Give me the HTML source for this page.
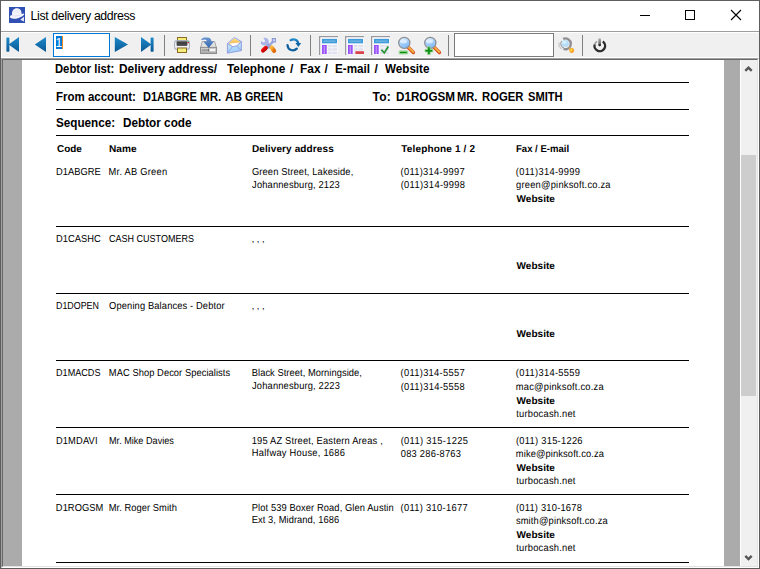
<!DOCTYPE html>
<html lang="en">
<head>
<meta charset="utf-8">
<title>List delivery address</title>
<style>
html,body{margin:0;padding:0;width:760px;height:569px;overflow:hidden;background:#fff;}
body{position:relative;font-family:"Liberation Sans",Arial,sans-serif;}
.abs{position:absolute;}
#win{position:absolute;left:0;top:0;width:760px;height:569px;background:#5e5e5e;}
#title{position:absolute;left:1px;top:1px;width:758px;height:30px;background:#fff;}
#title .cap{position:absolute;left:29.6px;top:7px;font-size:12.3px;line-height:16px;color:#000;white-space:pre;letter-spacing:-0.36px;}
#tline{position:absolute;left:1px;top:31px;width:758px;height:1px;background:#9d9d9d;}
#tb{position:absolute;left:1px;top:32px;width:758px;height:25px;background:#f0f0f0;border-left:1px solid #fff;border-top:1px solid #fff;box-sizing:border-box;}
#tbw{position:absolute;left:1px;top:57px;width:758px;height:1px;background:#fff;}
#panel{position:absolute;left:1px;top:58px;width:758px;height:510px;box-sizing:border-box;border-top:1px solid #a0a0a0;border-left:1px solid #a0a0a0;border-right:1px solid #fff;border-bottom:1px solid #fff;background:#ababab;}
#panel2{position:absolute;left:2px;top:59px;width:756px;height:508px;box-sizing:border-box;border-top:1px solid #696969;border-left:1px solid #696969;border-right:1px solid #e3e3e3;border-bottom:1px solid #e3e3e3;background:#ababab;}
#page{position:absolute;left:22px;top:60px;width:702px;height:506px;background:#fff;}
#sb{position:absolute;left:740px;top:60px;width:17px;height:506px;background:#f0f0f0;border-left:1px solid #fff;box-sizing:border-box;}
#thumb{position:absolute;left:741px;top:155px;width:15px;height:241px;background:#cdcdcd;}
.sep{position:absolute;top:35px;width:1px;height:21px;background:#808080;}
.t{position:absolute;white-space:pre;line-height:14px;color:#000;}
.H{font-size:12.0px;font-weight:bold;transform-origin:0 11.00px;}
.C{font-size:10.0px;font-weight:bold;transform-origin:0 9.00px;text-rendering:geometricPrecision;}
.D{font-size:9.33px;font-weight:normal;transform-origin:0 10.00px;text-rendering:geometricPrecision;}

.rule{position:absolute;left:56px;width:633px;height:1px;background:#000;}
.inp{position:absolute;box-sizing:border-box;background:#fff;}
svg{position:absolute;overflow:visible;}
</style>
</head>
<body>
<div id="win"></div>
<div id="title"><span class="cap">List delivery address</span></div>
<div id="tline"></div>
<div id="tb"></div>
<div id="tbw"></div>
<div id="panel"></div>
<div id="panel2"></div>
<div id="page"></div>
<div id="sb"></div>
<div id="thumb"></div>
<svg width="0" height="0" style="left:0;top:0">
<defs>
<linearGradient id="gb" x1="0" y1="0" x2="0" y2="1"><stop offset="0" stop-color="#1e8acb"/><stop offset="1" stop-color="#0a5893"/></linearGradient>
<radialGradient id="lens" cx="0.45" cy="0.35" r="0.7"><stop offset="0" stop-color="#e8f3ff"/><stop offset="1" stop-color="#8fbef0"/></radialGradient>
<linearGradient id="hdl" x1="0" y1="0" x2="1" y2="1"><stop offset="0" stop-color="#f6b24a"/><stop offset="1" stop-color="#e0661a"/></linearGradient>
</defs>
</svg>
<!-- title icon -->
<svg style="left:9px;top:7px" width="16" height="16" viewBox="0 0 16 16">
<rect x="0" y="0" width="16" height="16" fill="#3150b4"/>
<path d="M3.1 8 C2.5 3.6 5 1.3 7.8 1.3 C10.8 1.3 12.7 3.4 12.5 7.1 L14.9 6.5 C15.7 7.5 14 9.5 9.6 10.9 C5.6 12.2 1.6 12.1 0.9 10.1 C0.6 9.1 1.6 8.4 3.1 8 Z" fill="#f3f5fb"/>
<path d="M3.1 8 C4.6 9.8 10 9 12.5 7.1" fill="none" stroke="#d3d8ec" stroke-width="0.7"/>
<path d="M5.2 3.6 L10.2 3.4 L10.4 5.6 L5.4 5.9 Z" fill="#e6e9f5" opacity="0.7"/>
<path d="M15 9.8 L15 14.6 L11.2 12.7 Z" fill="#e4e7f4"/>
</svg>
<!-- window controls -->
<svg style="left:630px;top:0" width="130" height="31" viewBox="0 0 130 31">
<rect x="10" y="15" width="10" height="1" fill="#000"/>
<rect x="55.5" y="10.5" width="9" height="9" fill="none" stroke="#000" stroke-width="1"/>
<path d="M101 10 L111 20 M111 10 L101 20" stroke="#000" stroke-width="1.1" fill="none"/>
</svg>
<!-- nav icons -->
<svg style="left:0;top:32px" width="160" height="26" viewBox="0 32 160 26">
<rect x="6.4" y="37.6" width="3" height="14.2" rx="0.8" fill="url(#gb)"/>
<path d="M19 37.1 L19 51.9 L8.6 44.5 Z" fill="url(#gb)"/>
<path d="M46 37 L46 52 L34.8 44.5 Z" fill="url(#gb)"/>
<path d="M114.8 37 L114.8 52 L128 44.5 Z" fill="url(#gb)"/>
<path d="M141 37.1 L141 51.9 L151.4 44.5 Z" fill="url(#gb)"/>
<rect x="150.6" y="37.6" width="3" height="14.2" rx="0.8" fill="url(#gb)"/>
</svg>
<!-- page input -->
<div class="inp" style="left:53px;top:33px;width:57px;height:24px;border:1px solid #0078d7;"></div>
<div class="abs" style="left:56px;top:36px;width:6px;height:13px;background:#0078d7;"></div>
<div class="abs" style="left:62px;top:36px;width:1px;height:13px;background:#f08a1c;"></div>
<span class="t" style="left:55.6px;top:35.5px;font-size:12px;color:#fff;">1</span>
<!-- separators -->
<div class="sep" style="left:164px"></div>
<div class="sep" style="left:250px"></div>
<div class="sep" style="left:310px"></div>
<div class="sep" style="left:448px"></div>
<div class="sep" style="left:582px"></div>
<!-- search input -->
<div class="inp" style="left:454px;top:33px;width:100px;height:24px;border:1px solid #7a7a7a;"></div>
<svg width="0" height="0" style="left:0;top:0"><defs>
<linearGradient id="slot" x1="0" y1="0" x2="0" y2="1"><stop offset="0" stop-color="#8a8a8a"/><stop offset="0.35" stop-color="#3a3a3a"/><stop offset="1" stop-color="#5a5a5a"/></linearGradient>
<linearGradient id="pbody" x1="0" y1="0" x2="0" y2="1"><stop offset="0" stop-color="#d5d9e4"/><stop offset="0.6" stop-color="#fbfbfd"/><stop offset="1" stop-color="#c9cedb"/></linearGradient>
<linearGradient id="yel" x1="0" y1="0" x2="1" y2="0"><stop offset="0" stop-color="#fbf76c"/><stop offset="0.5" stop-color="#efe884"/><stop offset="1" stop-color="#fbf76c"/></linearGradient>
<linearGradient id="drv" x1="0" y1="0" x2="0" y2="1"><stop offset="0" stop-color="#d6d6d6"/><stop offset="1" stop-color="#a8a8a8"/></linearGradient>
<linearGradient id="arr" x1="0" y1="0" x2="0" y2="1"><stop offset="0" stop-color="#6a97d2"/><stop offset="1" stop-color="#3467ad"/></linearGradient>
<linearGradient id="env" x1="0" y1="0" x2="0.3" y2="1"><stop offset="0" stop-color="#e0f4fc"/><stop offset="1" stop-color="#9ccff8"/></linearGradient>
<linearGradient id="flap" x1="0" y1="0" x2="0" y2="1"><stop offset="0" stop-color="#fbe07a"/><stop offset="1" stop-color="#f3a64a"/></linearGradient>
<linearGradient id="redh" x1="0" y1="0" x2="1" y2="1"><stop offset="0" stop-color="#f41010"/><stop offset="1" stop-color="#b80000"/></linearGradient>
<linearGradient id="orh" x1="0" y1="0" x2="1" y2="1"><stop offset="0" stop-color="#fcb83c"/><stop offset="1" stop-color="#e06a08"/></linearGradient>
<linearGradient id="blu2" x1="0" y1="0" x2="0" y2="1"><stop offset="0" stop-color="#1e88ca"/><stop offset="1" stop-color="#0a5693"/></linearGradient>
<linearGradient id="lensg" x1="0.2" y1="0" x2="0.6" y2="1"><stop offset="0" stop-color="#dcecff"/><stop offset="0.5" stop-color="#a6cffb"/><stop offset="1" stop-color="#7db6f3"/></linearGradient>
<linearGradient id="pwr" x1="0" y1="0" x2="0" y2="1"><stop offset="0" stop-color="#b4b4b4"/><stop offset="0.7" stop-color="#6a6a6a"/><stop offset="0.85" stop-color="#1c1c1c"/><stop offset="1" stop-color="#2c2c2c"/></linearGradient>
<radialGradient id="ball" cx="0.4" cy="0.4" r="0.6"><stop offset="0" stop-color="#ffe040"/><stop offset="1" stop-color="#f58a10"/></radialGradient>
<g id="layout">
<path d="M0.8 19 L0.8 0.8 L19 0.8" fill="none" stroke="#98989f" stroke-width="1.6"/>
<rect x="1.3" y="1.3" width="17.7" height="17.5" fill="#f6f6fb"/>
<rect x="3" y="2.9" width="15" height="4.4" fill="#3b9bdb"/>
<rect x="4.5" y="4.6" width="12" height="1" fill="#8cc0e4"/>
<rect x="3" y="9" width="4.7" height="9" fill="#9950f9"/>
<rect x="4.7" y="10" width="1.1" height="8" fill="#c3a4fb"/>
</g>
<g id="grid">
<rect x="9" y="9" width="9" height="2.2" fill="#e0e2ee"/>
<rect x="9" y="12.2" width="9" height="2.4" fill="#e0e2ee"/>
<rect x="9" y="15.7" width="9" height="2.3" fill="#e0e2ee"/>
<rect x="12.6" y="9" width="1" height="9" fill="#f0f1f8"/>
</g>
<g id="mag">
<path d="M9.6 9.7 L15.4 15.5" stroke="#d8481a" stroke-width="3.4" stroke-linecap="round"/>
<path d="M9.8 9.5 L15.3 15.0" stroke="#f6b040" stroke-width="1.8" stroke-linecap="round"/>
<circle cx="6.3" cy="5.9" r="5.6" fill="url(#lensg)" stroke="#8c8c90" stroke-width="1.2"/>
<ellipse cx="5.6" cy="4.2" rx="3.4" ry="2" fill="#eef6ff" opacity="0.7"/>
</g>
</defs></svg>
<!-- printer -->
<svg style="left:174px;top:37px" width="16" height="16" viewBox="0 0 16 16">
<rect x="3.5" y="0.5" width="9" height="4" fill="url(#yel)" stroke="#8b6b22" stroke-width="1"/>
<rect x="0.6" y="3.6" width="14.8" height="8.8" rx="1.8" fill="url(#pbody)" stroke="#9aa1b6" stroke-width="0.9"/>
<rect x="2.6" y="3.9" width="10.8" height="5" rx="0.6" fill="url(#slot)"/>
<rect x="3.5" y="11" width="9" height="4.5" fill="url(#yel)" stroke="#8b6b22" stroke-width="1"/>
<rect x="13.7" y="4" width="1.2" height="1" fill="#4cc060"/>
<rect x="13.7" y="5" width="1.2" height="1.2" fill="#d01020"/>
</svg>
<!-- export -->
<svg style="left:200px;top:37px" width="17" height="17" viewBox="0 0 17 17">
<path d="M2.2 4.5 L14.6 4.5 L16.4 10.6 L0.6 10.6 Z" fill="#e2e2e2" stroke="#a2a2a2" stroke-width="0.9"/>
<rect x="0.5" y="10.4" width="16" height="6.1" fill="url(#drv)" stroke="#8e8e8e" stroke-width="1"/>
<rect x="1.8" y="12.3" width="7" height="1.6" fill="#9a9a9a"/>
<rect x="9.6" y="12.2" width="5.6" height="2" fill="#fafafa"/>
<rect x="8.2" y="11.6" width="0.9" height="2.8" fill="#6a6a6a"/>
<path d="M0.9 2.6 L3.6 0.4 L8 0.4 C10.8 0.7 11.3 2.6 11.4 4.5 L14 4.5 L8.7 11 L3.4 4.5 L6.8 4.5 C6.8 3.3 6 2.6 4.4 2.6 L2.4 3.1 Z" fill="url(#arr)"/>
</svg>
<!-- mail -->
<svg style="left:226px;top:37px" width="16" height="17" viewBox="0 0 16 17">
<path d="M1.4 6.6 L8.4 0.5 L15.4 4.6 L15.4 13.6 L1.4 16.2 Z" fill="url(#env)" stroke="#8e97de" stroke-width="0.9" stroke-linejoin="round"/>
<path d="M2.6 6.2 L8.4 1.3 L14.2 4.8 L10.6 8.6 L6.4 9.2 Z" fill="url(#flap)"/>
<path d="M3.6 6.6 L13.4 5.4 L10.6 8.8 L6.4 9.4 Z" fill="#fdfdfd"/>
<path d="M1.4 6.6 L6.6 9.6 L10.6 8.9 L15.4 4.6" fill="none" stroke="#8b92dc" stroke-width="0.8"/>
<path d="M1.6 15.8 L6.6 9.6 M10.6 8.9 L15.2 13.4" fill="none" stroke="#8e97de" stroke-width="0.8"/>
</svg>
<!-- tools -->
<svg style="left:260px;top:37px" width="16" height="16" viewBox="0 0 16 16">
<path d="M13.2 4.4 L8.4 9.2" stroke="#98a4de" stroke-width="2.2"/>
<rect x="11.8" y="1" width="4.2" height="4.6" fill="#8f9bd8"/>
<rect x="13" y="2.2" width="2" height="2.2" fill="#cdd3f2"/>
<path d="M5 5 L10.4 10.4" stroke="#98a4de" stroke-width="3.6"/>
<path d="M3.4 0.9 C7.2 0 9.4 2.8 8.6 6 C7.4 9 3.8 9.2 1 7 L0.8 4 L3.8 5.6 L5.4 4.2 Z" fill="#a9b4e9"/>
<path d="M6.6 9.6 L10 9.6 L11.2 11 L8 11.4 Z" fill="#8b97d4"/>
<path d="M5.8 10.9 L3 13.5" stroke="url(#redh)" stroke-width="4.2" stroke-linecap="round"/>
<path d="M11.6 10.5 L14 13.7" stroke="url(#orh)" stroke-width="4.4" stroke-linecap="round"/>
</svg>
<!-- refresh -->
<svg style="left:286px;top:37px" width="16" height="16" viewBox="286 37 16 16">
<path d="M290.6 40.2 C293.8 38.2 298.0 40.0 298.3 44.0" fill="none" stroke="url(#blu2)" stroke-width="2.2" stroke-linecap="round"/>
<path d="M295.4 43.0 L301.2 43.0 L298.4 47.0 Z" fill="#0f69a8"/>
<path d="M287.5 45.0 C287.8 50.6 293.8 51.6 296.8 48.6" fill="none" stroke="#0c5e9c" stroke-width="2.2" stroke-linecap="round"/>
</svg>
<!-- layout icons -->
<svg style="left:319px;top:36px" width="19" height="19" viewBox="0 0 19 19"><use href="#layout"/><use href="#grid"/></svg>
<svg style="left:345px;top:36px" width="19" height="19" viewBox="0 0 19 19"><use href="#layout"/><use href="#grid"/><rect x="10.2" y="15" width="8.8" height="3.2" fill="#f6f6fb"/><rect x="10.4" y="15.2" width="8.6" height="2.8" fill="#d9434a"/></svg>
<svg style="left:371px;top:36px" width="19" height="19" viewBox="0 0 19 19"><use href="#layout"/><use href="#grid"/><path d="M10.4 13.9 L13.3 16.9 L17.3 10.6" fill="none" stroke="#2c9434" stroke-width="1.8"/></svg>
<!-- zoom out / in -->
<svg style="left:398px;top:37px" width="18" height="18" viewBox="0 0 18 18"><use href="#mag"/>
<rect x="1.1" y="13.8" width="8.6" height="3.2" rx="0.6" fill="#a6e0a0" stroke="#7ccb78" stroke-width="0.6"/><rect x="2" y="14.8" width="6.8" height="1.3" fill="#0c8a10"/></svg>
<svg style="left:424px;top:36.7px" width="18" height="18" viewBox="0 0 18 18"><use href="#mag"/>
<path d="M3.6 9.8 L6.2 9.8 L6.2 12.4 L8.8 12.4 L8.8 15 L6.2 15 L6.2 17.6 L3.6 17.6 L3.6 15 L1 15 L1 12.4 L3.6 12.4 Z" fill="#129016" stroke="#9ad896" stroke-width="0.8"/></svg>
<!-- search -->
<svg style="left:558px;top:37px" width="17" height="17" viewBox="558 37 17 17">
<path d="M563.12 38.91 A5.4 5.4 0 1 1 563.55 48.87" fill="none" stroke="#8f8f94" stroke-width="2.4"/>
<path d="M563.83 48.12 A4.6 4.6 0 0 1 561.63 41.16" fill="none" stroke="#9c9ca0" stroke-width="1.1"/>
<path d="M561.61 49.21 A6.6 6.6 0 0 1 558.90 42.65" fill="none" stroke="#b4b4b8" stroke-width="0.9"/>
<circle cx="565.2" cy="43.5" r="3.6" fill="#b4def8"/>
<ellipse cx="564.4" cy="42.3" rx="2" ry="1.5" fill="#dcf0fc"/>
<path d="M568.8 47.4 L570.4 49.2" stroke="#d0a060" stroke-width="1.6"/>
<circle cx="571.7" cy="50.5" r="2.4" fill="url(#ball)"/>
</svg>
<!-- power -->
<svg style="left:592px;top:37px" width="16" height="16" viewBox="592 37 16 16">
<path d="M596.99 41.41 A5.3 5.3 0 0 0 594.68 44.53" fill="none" stroke="#9c9c9c" stroke-width="1.6"/>
<path d="M594.68 44.53 A5.3 5.3 0 1 0 602.84 41.56" fill="none" stroke="#2b2b2b" stroke-width="2.3"/>
<rect x="598.3" y="38.2" width="2.7" height="8" rx="1.2" fill="url(#pwr)"/>
</svg>

<!-- scrollbar arrows -->
<svg style="left:740px;top:60px" width="17" height="506" viewBox="0 0 17 506">
<path d="M5.3 10.9 L8.5 7.7 L11.7 10.9" fill="none" stroke="#555" stroke-width="2.4"/>
<path d="M5.3 495.9 L8.5 499.1 L11.7 495.9" fill="none" stroke="#555" stroke-width="2.4"/>
</svg>

<div class="rule" style="top:82px"></div><div class="rule" style="top:109px"></div><div class="rule" style="top:135px"></div><div class="rule" style="top:226px"></div><div class="rule" style="top:293px"></div><div class="rule" style="top:360px"></div><div class="rule" style="top:427px"></div><div class="rule" style="top:494px"></div><div class="rule" style="top:562px"></div>
<span class="t H" style="left:55.47px;top:62.00px;transform:scale(0.9373,1.0);">Debtor list:</span>
<span class="t H" style="left:118.98px;top:62.00px;transform:scale(0.9871,1.0);">Delivery address/</span>
<span class="t H" style="left:226.50px;top:62.00px;transform:scale(0.9848,1.0);">Telephone</span>
<span class="t H" style="left:289.94px;top:62.00px;">/</span>
<span class="t H" style="left:299.94px;top:62.00px;transform:scale(0.9914,1.0);">Fax</span>
<span class="t H" style="left:324.61px;top:62.00px;">/</span>
<span class="t H" style="left:334.60px;top:62.00px;transform:scale(0.9735,1.0);">E-mail</span>
<span class="t H" style="left:374.46px;top:62.00px;">/</span>
<span class="t H" style="left:385.26px;top:62.00px;transform:scale(0.9708,1.0);">Website</span>
<span class="t H" style="left:55.80px;top:90.00px;transform:scale(0.9580,1.0);">From account:</span>
<span class="t H" style="left:142.60px;top:90.00px;transform:scale(0.9190,1.0);">D1ABGRE</span>
<span class="t H" style="left:200.32px;top:90.00px;transform:scale(0.9659,1.0);">MR.</span>
<span class="t H" style="left:224.72px;top:90.00px;transform:scale(0.9857,1.0);">AB</span>
<span class="t H" style="left:245.27px;top:90.00px;transform:scale(0.8867,1.0);">GREEN</span>
<span class="t H" style="left:372.51px;top:90.00px;letter-spacing:0.211px;">To:</span>
<span class="t H" style="left:395.56px;top:90.00px;transform:scale(0.9727,1.0);">D1ROGSM</span>
<span class="t H" style="left:457.31px;top:90.00px;transform:scale(0.9263,1.0);">MR.</span>
<span class="t H" style="left:482.16px;top:90.00px;transform:scale(0.9392,1.0);">ROGER</span>
<span class="t H" style="left:527.60px;top:90.00px;transform:scale(0.9268,1.0);">SMITH</span>
<span class="t H" style="left:56.09px;top:116.00px;transform:scale(0.9733,1.0);">Sequence:</span>
<span class="t H" style="left:122.74px;top:116.00px;transform:scale(0.9787,1.0);">Debtor code</span>
<span class="t C" style="left:56.52px;top:143.00px;transform:scale(0.9908,1.0);">Code</span>
<span class="t C" style="left:108.83px;top:143.00px;transform:scale(1.0095,1.0);">Name</span>
<span class="t C" style="left:251.92px;top:143.00px;letter-spacing:0.116px;">Delivery address</span>
<span class="t C" style="left:401.29px;top:143.00px;letter-spacing:0.159px;">Telephone 1 / 2</span>
<span class="t C" style="left:516.04px;top:143.00px;transform:scale(0.9546,1.0);">Fax / E-mail</span>
<span class="t D" style="left:56.11px;top:165.00px;letter-spacing:0.019px;transform:scale(1.0000,1.09);">D1ABGRE</span>
<span class="t D" style="left:108.58px;top:165.00px;letter-spacing:0.230px;transform:scale(1.0000,1.09);">Mr. AB Green</span>
<span class="t D" style="left:251.91px;top:165.00px;letter-spacing:0.128px;transform:scale(1.0000,1.09);">Green Street, Lakeside,</span>
<span class="t D" style="left:252.11px;top:178.00px;letter-spacing:0.149px;transform:scale(1.0000,1.09);">Johannesburg, 2123</span>
<span class="t D" style="left:400.52px;top:165.00px;letter-spacing:0.301px;transform:scale(1.0000,1.09);">(011)314-9997</span>
<span class="t D" style="left:400.67px;top:178.00px;letter-spacing:0.323px;transform:scale(1.0000,1.09);">(011)314-9998</span>
<span class="t D" style="left:515.83px;top:165.00px;letter-spacing:0.304px;transform:scale(1.0000,1.09);">(011)314-9999</span>
<span class="t D" style="left:516.05px;top:178.00px;letter-spacing:0.218px;transform:scale(1.0000,1.09);">green@pinksoft.co.za</span>
<span class="t C" style="left:516.57px;top:193.00px;letter-spacing:0.033px;">Website</span>
<span class="t D" style="left:55.89px;top:232.00px;letter-spacing:0.045px;transform:scale(1.0000,1.09);">D1CASHC</span>
<span class="t D" style="left:109.18px;top:232.00px;transform:scale(0.9663,1.09);">CASH CUSTOMERS</span>
<span class="t D" style="left:251.64px;top:232.00px;letter-spacing:0.030px;transform:scale(1.0000,1.09);">, , ,</span>
<span class="t C" style="left:516.57px;top:260.00px;letter-spacing:0.033px;">Website</span>
<span class="t D" style="left:56.17px;top:299.00px;transform:scale(0.9523,1.09);">D1DOPEN</span>
<span class="t D" style="left:109.12px;top:299.00px;letter-spacing:0.124px;transform:scale(1.0000,1.09);">Opening Balances - Debtor</span>
<span class="t D" style="left:251.64px;top:299.00px;letter-spacing:0.030px;transform:scale(1.0000,1.09);">, , ,</span>
<span class="t C" style="left:516.57px;top:328.00px;letter-spacing:0.033px;">Website</span>
<span class="t D" style="left:55.59px;top:366.00px;transform:scale(0.9752,1.09);">D1MACDS</span>
<span class="t D" style="left:108.85px;top:366.00px;letter-spacing:0.060px;transform:scale(1.0000,1.09);">MAC Shop Decor Specialists</span>
<span class="t D" style="left:251.79px;top:366.00px;letter-spacing:0.047px;transform:scale(1.0000,1.09);">Black Street, Morningside,</span>
<span class="t D" style="left:252.02px;top:379.00px;letter-spacing:0.163px;transform:scale(1.0000,1.09);">Johannesburg, 2223</span>
<span class="t D" style="left:400.59px;top:366.00px;letter-spacing:0.293px;transform:scale(1.0000,1.09);">(011)314-5557</span>
<span class="t D" style="left:400.65px;top:380.00px;letter-spacing:0.302px;transform:scale(1.0000,1.09);">(011)314-5558</span>
<span class="t D" style="left:515.83px;top:366.00px;letter-spacing:0.304px;transform:scale(1.0000,1.09);">(011)314-5559</span>
<span class="t D" style="left:515.80px;top:380.00px;letter-spacing:0.218px;transform:scale(1.0000,1.09);">mac@pinksoft.co.za</span>
<span class="t C" style="left:516.57px;top:395.00px;letter-spacing:0.033px;">Website</span>
<span class="t D" style="left:516.15px;top:407.00px;letter-spacing:0.233px;transform:scale(1.0000,1.09);">turbocash.net</span>
<span class="t D" style="left:55.90px;top:434.00px;letter-spacing:0.142px;transform:scale(1.0000,1.09);">D1MDAVI</span>
<span class="t D" style="left:108.82px;top:434.00px;transform:scale(0.9773,1.09);">Mr. Mike Davies</span>
<span class="t D" style="left:251.70px;top:434.00px;letter-spacing:0.176px;transform:scale(1.0000,1.09);">195 AZ Street, Eastern Areas ,</span>
<span class="t D" style="left:251.86px;top:446.00px;letter-spacing:0.241px;transform:scale(1.0000,1.09);">Halfway House, 1686</span>
<span class="t D" style="left:400.68px;top:434.00px;letter-spacing:0.317px;transform:scale(1.0000,1.09);">(011) 315-1225</span>
<span class="t D" style="left:400.77px;top:447.00px;letter-spacing:0.237px;transform:scale(1.0000,1.09);">083 286-8763</span>
<span class="t D" style="left:515.98px;top:434.00px;letter-spacing:0.267px;transform:scale(1.0000,1.09);">(011) 315-1226</span>
<span class="t D" style="left:515.83px;top:447.00px;letter-spacing:0.109px;transform:scale(1.0000,1.09);">mike@pinksoft.co.za</span>
<span class="t C" style="left:516.57px;top:462.00px;letter-spacing:0.033px;">Website</span>
<span class="t D" style="left:516.15px;top:474.00px;letter-spacing:0.233px;transform:scale(1.0000,1.09);">turbocash.net</span>
<span class="t D" style="left:55.87px;top:501.00px;letter-spacing:0.039px;transform:scale(1.0000,1.09);">D1ROGSM</span>
<span class="t D" style="left:108.80px;top:501.00px;letter-spacing:0.047px;transform:scale(1.0000,1.09);">Mr. Roger Smith</span>
<span class="t D" style="left:251.77px;top:501.00px;letter-spacing:0.095px;transform:scale(1.0000,1.09);">Plot 539 Boxer Road, Glen Austin</span>
<span class="t D" style="left:251.81px;top:513.00px;letter-spacing:0.064px;transform:scale(1.0000,1.09);">Ext 3, Midrand, 1686</span>
<span class="t D" style="left:400.58px;top:501.00px;letter-spacing:0.303px;transform:scale(1.0000,1.09);">(011) 310-1677</span>
<span class="t D" style="left:515.99px;top:501.00px;letter-spacing:0.212px;transform:scale(1.0000,1.09);">(011) 310-1678</span>
<span class="t D" style="left:515.88px;top:514.00px;letter-spacing:0.157px;transform:scale(1.0000,1.09);">smith@pinksoft.co.za</span>
<span class="t C" style="left:516.57px;top:529.00px;letter-spacing:0.033px;">Website</span>
<span class="t D" style="left:516.15px;top:541.00px;letter-spacing:0.233px;transform:scale(1.0000,1.09);">turbocash.net</span>
</body>
</html>
